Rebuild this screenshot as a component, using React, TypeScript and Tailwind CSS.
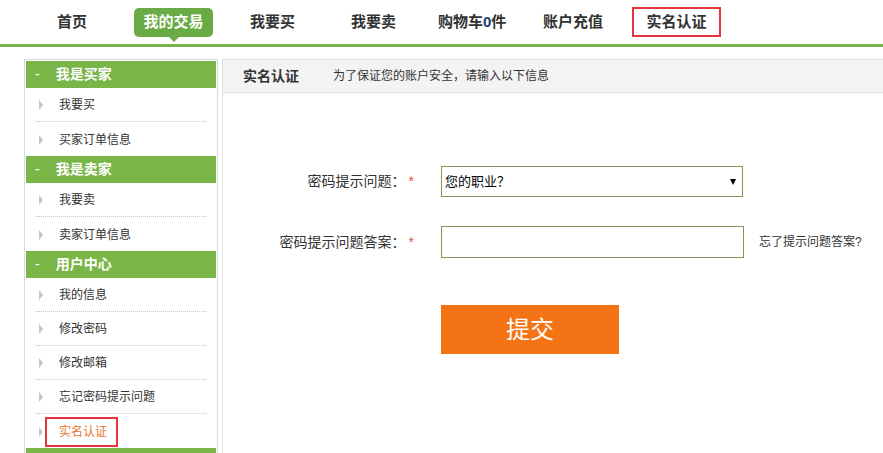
import { useState } from "react";

const NAV = ["首页", "我的交易", "我要买", "我要卖", "购物车0件", "账户充值", "实名认证"];

const GROUPS = [
  { title: "我是买家", items: ["我要买", "买家订单信息"] },
  { title: "我是卖家", items: ["我要卖", "卖家订单信息"] },
  { title: "用户中心", items: ["我的信息", "修改密码", "修改邮箱", "忘记密码提示问题", "实名认证"] },
];

const FONT = "font-['Liberation_Sans','Noto_Sans_CJK_SC',sans-serif]";

function NavBar() {
  return (
    <header className="h-[47px] border-b-[3px] border-[#78b14a] bg-white">
      <ul className="flex h-[44px] items-center pl-[57px] text-[15px] font-bold text-[#333]">
        <li className="w-[77px]">{NAV[0]}</li>
        <li className="relative mr-[37px] flex h-[29px] w-[79px] items-center justify-center rounded-[5px] bg-[#6aab45] text-white">
          {NAV[1]}
          <span className="absolute left-1/2 top-[29px] -ml-[5px] h-0 w-0 border-x-[5px] border-t-[5px] border-x-transparent border-t-[#6aab45]" />
        </li>
        <li className="w-[101px]">{NAV[2]}</li>
        <li className="w-[87px]">{NAV[3]}</li>
        <li className="w-[105px]">购物车<span className="text-[#1c3d70]">0</span>件</li>
        <li className="w-[89px]">{NAV[5]}</li>
        <li className="flex h-[30px] w-[89px] items-center justify-center border-2 border-[#e3353b]">{NAV[6]}</li>
      </ul>
    </header>
  );
}

function Sidebar() {
  return (
    <aside className="ml-[24px] w-[194px] shrink-0 border border-[#d8d8d8] px-[1px] pt-[1px]">
      {GROUPS.map((g) => (
        <div key={g.title}>
          <div className="flex h-[27px] items-center bg-[#7ab548] text-[14px] font-bold text-white">
            <span className="ml-[9px] mr-[16px] font-normal">-</span>
            {g.title}
          </div>
          <ul className="px-[10px]">
            {g.items.map((it, i) => {
              const active = it === "实名认证";
              const last = i === g.items.length - 1;
              return (
                <li
                  key={it}
                  className={`flex h-[34px] items-center pt-[1px] text-[12px] ${last ? "" : "border-b border-dotted border-[#c8c8c8]"}`}
                >
                  <span className="ml-[3px] mr-[16px] h-0 w-0 border-y-[5px] border-l-[4px] border-y-transparent border-l-[#c5c5c5]" />
                  {active ? (
                    <span className="-ml-[14px] flex h-[30px] items-center border-2 border-[#e3353b] pl-[12px] pr-[9px] text-[#e5772b]">
                      {it}
                    </span>
                  ) : (
                    <span className="text-[#333]">{it}</span>
                  )}
                </li>
              );
            })}
          </ul>
        </div>
      ))}
      <div className="h-[6px] bg-[#7ab548]" />
    </aside>
  );
}

function Form() {
  const [answer, setAnswer] = useState("");
  return (
    <section className="ml-[4px] flex-1 border-l border-[#e0e0e0]">
      <div className="flex h-[34px] items-center border-y border-[#e0e0e0] bg-[#f3f3f3]">
        <h2 className="ml-[20px] mr-[34px] text-[14px] font-bold text-[#333]">实名认证</h2>
        <p className="text-[12px] text-[#333]">为了保证您的账户安全，请输入以下信息</p>
      </div>
      <div className="pt-[73px]">
        <div className="flex items-center">
          <label className="w-[191px] text-right text-[14px] text-[#333]">
            密码提示问题：<span className="ml-[3px] text-[#e0584a]">*</span>
          </label>
          <div className="relative ml-[27px] flex h-[31px] w-[302px] items-center border border-[#7d9a5c] px-[3px] text-[13px] text-black">
            您的职业？
            <span className="absolute right-[6px] top-[12px] h-0 w-0 border-x-[3px] border-t-[6px] border-x-transparent border-t-black" />
          </div>
        </div>
        <div className="mt-[29px] flex items-center">
          <label className="w-[191px] text-right text-[14px] text-[#333]">
            密码提示问题答案：<span className="ml-[3px] text-[#e0584a]">*</span>
          </label>
          <input
            value={answer}
            onChange={(e) => setAnswer(e.target.value)}
            className="ml-[27px] h-[32px] w-[303px] border border-[#7d9a5c] px-[3px] text-[13px] outline-none"
          />
          <span className="ml-[15px] text-[12px] text-[#333]">忘了提示问题答案?</span>
        </div>
        <button
          type="button"
          className="ml-[218px] mt-[47px] h-[49px] w-[178px] bg-[#f47315] text-[24px] text-white"
        >
          提交
        </button>
      </div>
    </section>
  );
}

export default function App() {
  return (
    <div className={`h-[453px] w-[883px] overflow-hidden bg-white ${FONT}`}>
      <NavBar />
      <div className="mt-[12px] flex">
        <Sidebar />
        <Form />
      </div>
    </div>
  );
}
